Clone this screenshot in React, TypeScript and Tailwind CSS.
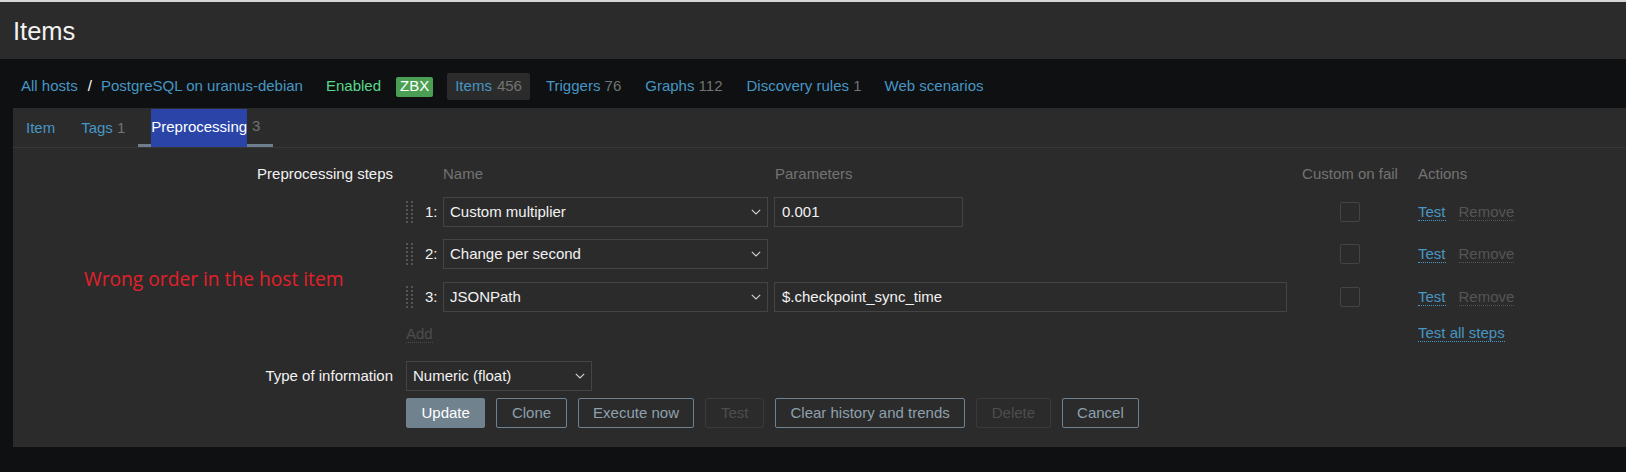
import React from "react";

const steps = [
  { n: 1, name: "Custom multiplier", param: "0.001", pw: "w-[189px]", mt: "mt-[11px]" },
  { n: 2, name: "Change per second", param: null, pw: "", mt: "mt-[12px]" },
  { n: 3, name: "JSONPath", param: "$.checkpoint_sync_time", pw: "w-[513px]", mt: "mt-[13px]" },
];

function Chevron() {
  return (
    <svg width="10" height="6" viewBox="0 0 10 6" className="shrink-0">
      <path d="M0.8 0.8 L5 5 L9.2 0.8" fill="none" stroke="#d4d4d4" strokeWidth="1.1" />
    </svg>
  );
}

function Select({ value, width }: { value: string; width: string }) {
  return (
    <div
      className={`flex h-[30px] items-center justify-between border border-[#444] bg-[#2b2b2b] pl-[6px] pr-[6px] text-[#f2f2f2] ${width}`}
    >
      <span>{value}</span>
      <Chevron />
    </div>
  );
}

function Handle() {
  return (
    <div className="grid w-[7px] grid-cols-2 gap-x-[3px] gap-y-[2px]">
      {Array.from({ length: 12 }).map((_, i) => (
        <span key={i} className="h-[2px] w-[2px] bg-[#555]" />
      ))}
    </div>
  );
}

function Button({ label, kind }: { label: string; kind: "primary" | "alt" | "off" }) {
  const styles = {
    primary: "bg-[#71828f] border-[#71828f] text-white",
    alt: "border-[#6f8292] text-[#8ea0ae]",
    off: "border-[#3a3a3a] text-[#4d4d4d]",
  };
  return (
    <div className={`flex h-[30px] items-center rounded-[2px] border px-[14.5px] ${styles[kind]}`}>
      {label}
    </div>
  );
}

export default function App() {
  return (
    <div className="min-h-[472px] bg-[#0e1012] font-['Liberation_Sans',Arial,sans-serif] text-[15px] text-[#f2f2f2]">
      <div className="h-[2px] bg-[#d6d6d6]" />
      <header className="flex h-[57px] items-center bg-[#2b2b2b] pt-[1px] pl-[13px]">
        <h1 className="text-[25.5px] text-[#f2f2f2]">Items</h1>
      </header>

      <nav className="flex h-[49px] items-center pl-[21px] pt-[6px]">
        <a className="text-[#4796c4]">All hosts</a>
        <span className="ml-[10px] text-white">/</span>
        <a className="ml-[9px] text-[#4796c4]">PostgreSQL on uranus-debian</a>
        <span className="ml-[23px] text-[#5ad98c]">Enabled</span>
        <span className="ml-[15px] flex h-[20px] items-center rounded-[2px] bg-[#4b9f54] px-[4px] text-white">
          ZBX
        </span>
        <span className="ml-[14px] flex h-[27px] items-center rounded-[2px] bg-[#2b2b2b] px-[8px]">
          <span className="text-[#4796c4]">Items</span>
          <span className="ml-[5px] text-[#737373]">456</span>
        </span>
        <a className="ml-[16px] text-[#4796c4]">
          Triggers <span className="text-[#737373]">76</span>
        </a>
        <a className="ml-[24px] text-[#4796c4]">
          Graphs <span className="text-[#737373]">112</span>
        </a>
        <a className="ml-[24px] text-[#4796c4]">
          Discovery rules <span className="text-[#737373]">1</span>
        </a>
        <a className="ml-[23px] text-[#4796c4]">Web scenarios</a>
      </nav>

      <main className="relative ml-[13px] bg-[#2b2b2b] pb-[19px]">
        <div className="flex h-[40px] border-b border-[#383838]">
          <div className="flex h-[39px] items-center px-[13px] pt-[1px] text-[#4796c4]">Item</div>
          <div className="flex h-[39px] items-center px-[13px] pt-[1px] text-[#4796c4]">
            Tags<span className="ml-[4px] text-[#737373]">1</span>
          </div>
          <div className="flex h-[39px] items-stretch border-b-[3px] border-[#6d7f8d] px-[13px]">
            <span className="mt-[1px] flex h-[38px] items-center bg-[#2a45a7] pb-[2px] text-white">
              Preprocessing
            </span>
            <span className="ml-[5px] flex items-center pt-[1px] text-[#737373]">3</span>
          </div>
        </div>

        <span className="absolute left-[71px] top-[158px] font-['Open_Sans',sans-serif] text-[19.2px] leading-[26px] text-[#e3202a]">
          Wrong order in the host item
        </span>

        <div className="flex pt-[14px]">
          <div className="w-[380px] text-right leading-[24px]">Preprocessing steps</div>
          <div className="ml-[13px] flex flex-col">
            <div className="flex h-[24px] items-center text-[#737373]">
              <div className="w-[37px]" />
              <div className="w-[331px]">Name</div>
              <div className="ml-[1px] w-[525px]">Parameters</div>
              <div className="w-[100px] whitespace-nowrap text-center">Custom on fail</div>
              <div className="ml-[18px]">Actions</div>
            </div>

            {steps.map((s) => (
              <div key={s.n} className={`flex h-[30px] items-center ${s.mt}`}>
                <div className="w-[19px]">
                  <Handle />
                </div>
                <div className="w-[12px] text-[#f2f2f2]">{s.n}:</div>
                <div className="ml-[6px]">
                  <Select value={s.name} width="w-[325px]" />
                </div>
                <div className="ml-[6px] w-[526px]">
                  {s.param && (
                    <div className={`flex h-[30px] items-center border border-[#444] pl-[7px] ${s.pw}`}>
                      {s.param}
                    </div>
                  )}
                </div>
                <div className="flex w-[100px] justify-center">
                  <span className="h-[20px] w-[20px] rounded-[2px] border border-[#444]" />
                </div>
                <div className="ml-[18px] flex gap-[13px] leading-[17px]">
                  <span className="border-b border-dotted border-[#4796c4] text-[#4796c4]">Test</span>
                  <span className="border-b border-dotted border-[#555] text-[#555]">Remove</span>
                </div>
              </div>
            ))}

            <div className="mt-[11px] flex h-[20px] items-center leading-[17px]">
              <div className="w-[1012px]">
                <span className="border-b border-dotted border-[#4d4d4d] text-[#4d4d4d]">Add</span>
              </div>
              <span className="border-b border-dotted border-[#4796c4] text-[#4796c4]">Test all steps</span>
            </div>
          </div>
        </div>

        <div className="mt-[18px] flex items-center">
          <div className="w-[380px] text-right">Type of information</div>
          <div className="ml-[13px]">
            <Select value="Numeric (float)" width="w-[186px]" />
          </div>
        </div>

        <div className="ml-[393px] mt-[7px] flex gap-[11px]">
          <Button label="Update" kind="primary" />
          <Button label="Clone" kind="alt" />
          <Button label="Execute now" kind="alt" />
          <Button label="Test" kind="off" />
          <Button label="Clear history and trends" kind="alt" />
          <Button label="Delete" kind="off" />
          <Button label="Cancel" kind="alt" />
        </div>
      </main>
    </div>
  );
}
